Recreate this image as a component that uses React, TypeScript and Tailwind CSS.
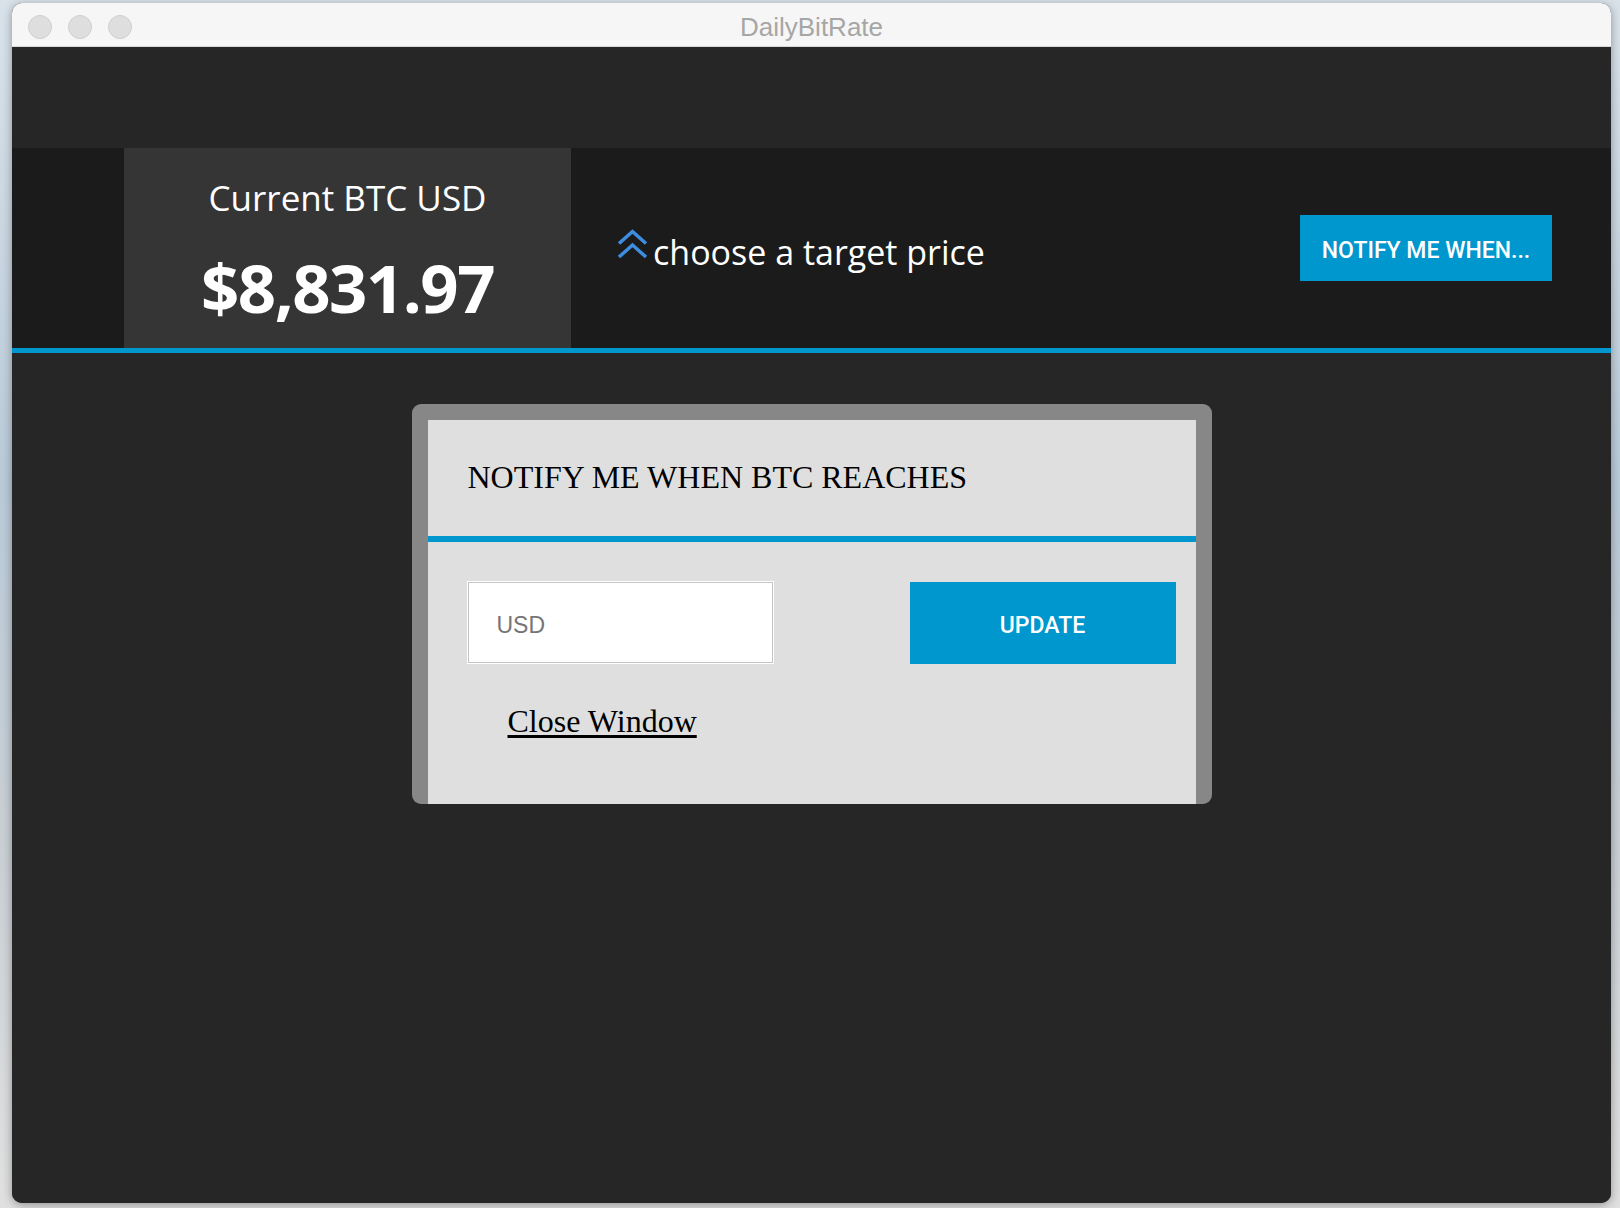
// DailyBitRate window: price header + "notify me when" modal over a dark body.

function DoubleChevronUp() {
  return (
    <svg width="31" height="30" viewBox="0 0 31 30" fill="none" className="mb-[18px] shrink-0">
      <polyline points="2,14.5 15.5,2.5 29,14.5" stroke="#3d8ee0" strokeWidth="3.5" strokeLinejoin="miter" />
      <polyline points="2,28 15.5,16 29,28" stroke="#3d8ee0" strokeWidth="3.5" strokeLinejoin="miter" />
    </svg>
  );
}

function TitleBar() {
  return (
    <div className="relative flex h-[44px] shrink-0 items-center border-b border-[#d9d9d9] bg-[#f6f6f6] pt-[4px]">
      <div className="flex items-center gap-[16px] pl-[16px]">
        <span className="h-[24px] w-[24px] rounded-full border border-[#cfcfcf] bg-[#dedede]" />
        <span className="h-[24px] w-[24px] rounded-full border border-[#cfcfcf] bg-[#dedede]" />
        <span className="h-[24px] w-[24px] rounded-full border border-[#cfcfcf] bg-[#dedede]" />
      </div>
      <div className="absolute inset-0 flex items-center justify-center pt-[5px] font-['Liberation_Sans',Arial,sans-serif] text-[26px] text-[#a6a6a6]">
        DailyBitRate
      </div>
    </div>
  );
}

function PriceHeader() {
  return (
    <div className="flex h-[200px] shrink-0 bg-[#1b1b1b]">
      <div className="w-[112px] shrink-0" />
      {/* current price card */}
      <div className="flex w-[447px] shrink-0 flex-col items-center bg-[#353535] pt-[32px] font-['Open_Sans',sans-serif] text-white">
        <div className="text-[35px] leading-none">Current BTC USD</div>
        <div className="mt-[39px] text-[67px] font-bold leading-none tracking-[-1.5px]">$8,831.97</div>
      </div>
      <div className="flex flex-1 items-center pl-[46px] pt-[9px]">
        <DoubleChevronUp />
        <span className="ml-[5px] font-['Open_Sans',sans-serif] text-[34px] text-white">choose a target price</span>
      </div>
      <button
        type="button"
        className="mr-[59px] h-[66px] w-[252px] self-center bg-[#0096ce] pt-[6px] font-['Roboto',sans-serif] text-[23px] font-medium text-white"
      >
        NOTIFY ME WHEN...
      </button>
    </div>
  );
}

function NotifyModal() {
  return (
    <div className="mx-auto mt-[51px] w-[800px] rounded-[9px] bg-[#878787] px-[16px] pt-[16px]">
      <div className="flex h-[384px] flex-col bg-[#dfdfdf]">
        <div className="h-[116px] shrink-0 pl-[40px] pt-[41px] font-['Liberation_Serif','Times_New_Roman',serif] text-[32px] leading-none text-black">
          NOTIFY ME WHEN BTC REACHES
        </div>
        <div className="h-[6px] shrink-0 bg-[#0096ce]" />
        <div className="flex flex-col pl-[40px] pr-[20px] pt-[40px]">
          <div className="flex items-start justify-between">
            <input
              placeholder="USD"
              className="h-[81px] w-[305px] border border-[#c4c4c4] bg-white pl-[28px] pt-[6px] font-['Liberation_Sans',Arial,sans-serif] text-[23px] text-black shadow-[0_0_0_1px_#ffffff] outline-none placeholder:text-[#757575]"
            />
            <button
              type="button"
              className="h-[82px] w-[266px] bg-[#0096ce] pt-[6px] font-['Roboto',sans-serif] text-[23px] font-medium text-white"
            >
              UPDATE
            </button>
          </div>
          <a
            href="#"
            className="ml-[40px] mt-[41px] self-start font-['Liberation_Serif','Times_New_Roman',serif] text-[32px] leading-none text-black underline underline-offset-[3px]"
          >
            Close Window
          </a>
        </div>
      </div>
    </div>
  );
}

export default function App() {
  return (
    <div className="min-h-screen w-full bg-[linear-gradient(180deg,#d9e2e9_0%,#b9cad8_40%,#c9cfd4_70%,#e0e0e0_100%)] pl-[12px] pt-[3px]">
      <div className="flex h-[1200px] w-[1599px] flex-col overflow-hidden rounded-[10px] bg-[#262626] shadow-[0_2px_10px_rgba(0,0,0,0.35)]">
        <TitleBar />
        <div className="h-[101px] shrink-0 bg-[#262626]" />
        <PriceHeader />
        <div className="h-[5px] shrink-0 bg-[#0096ce]" />
        <div className="flex-1 bg-[#262626]">
          <NotifyModal />
        </div>
      </div>
    </div>
  );
}
